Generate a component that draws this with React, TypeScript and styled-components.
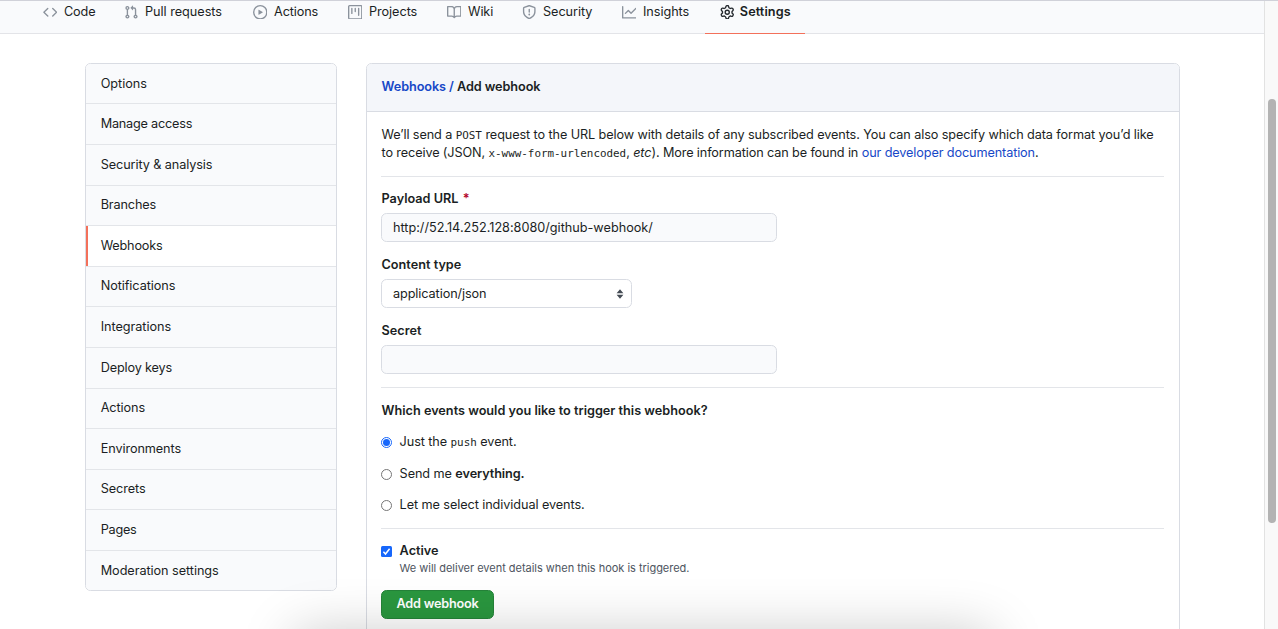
import React from 'react';
import styled, { createGlobalStyle } from 'styled-components';

const Global = createGlobalStyle`
  *, *::before, *::after { box-sizing: border-box; }
  html, body { margin: 0; height: 100%; overflow: hidden; background: #fff; }
  body {
    font-family: Inter, "Liberation Sans", sans-serif;
    font-size: 12.7px;
    line-height: 18px;
    color: #1b1f24;
  }
  b { font-weight: 600; }
`;

const Page = styled.div`
  position: relative;
  display: flex;
  width: 1278px;
  height: 629px;
  overflow: hidden;
  border-top: 1px solid #d0d1d9;
`;
const Content = styled.div`
  flex: 1;
  min-width: 0;
`;
const Track = styled.div`
  width: 14px;
  padding: 98px 0 0 3px;
  background: #f9f9f9;
  border-left: 1px solid #e2e2e2;
`;
const Thumb = styled.div`
  width: 8px;
  height: 424px;
  border-radius: 4px;
  background: #b3b3b3;
`;
const Nav = styled.nav`
  display: flex;
  height: 33px;
  padding-left: 28px;
  background: #f9fafc;
  border-bottom: 1px solid #e3e4e8;
`;
const Tab = styled.a<{ $w: number; $ls: number; $active?: boolean }>`
  display: flex;
  align-items: flex-start;
  width: ${(p) => p.$w}px;
  height: 33px;
  padding: 2px 0 0 14.5px;
  white-space: nowrap;
  letter-spacing: ${(p) => p.$ls}px;
  font-weight: ${(p) => (p.$active ? 600 : 400)};
  color: #1b1f24;
  border-bottom: ${(p) => (p.$active ? '1px solid #f3705a' : '0')};
`;
const Glyph = styled.svg<{ $active?: boolean }>`
  flex: none;
  width: 14.5px;
  height: 14.5px;
  margin: 1.5px ${(p) => (p.$active ? 5.8 : 7)}px 0 0;
  fill: ${(p) => (p.$active ? '#24292e' : '#8b929c')};
`;
const Columns = styled.div`
  display: flex;
  align-items: flex-start;
  gap: 29px;
  padding: 29px 84px 0 85px;
`;
const Menu = styled.aside`
  width: 252px;
  border: 1px solid #d9dce3;
  border-radius: 5.5px;
  overflow: hidden;
`;
const MenuItem = styled.a<{ $active?: boolean; $ls: number }>`
  display: flex;
  align-items: center;
  height: 40.6px;
  padding: 0 0 0.4px 14.7px;
  letter-spacing: ${(p) => p.$ls}px;
  background: ${(p) => (p.$active ? '#fff' : '#f9fafc')};
  box-shadow: ${(p) => (p.$active ? 'inset 2px 0 0 #f3705a' : 'none')};
  border-bottom: 1px solid #e3e5e9;
  &:first-child { height: 40.4px; }
  &:last-child { border-bottom: 0; height: 39.2px; padding: 0 0 0 14.7px; }
`;
const Panel = styled.main`
  flex: 1;
  height: 620px;
  border: 1px solid #d9dce3;
  border-radius: 5.5px;
  overflow: hidden;
`;
const PanelHead = styled.header`
  height: 48px;
  padding: 14px 14.5px;
  background: #f4f6fa;
  border-bottom: 1px solid #d9dce3;
  font-weight: 600;
  letter-spacing: -0.08px;
`;
const Link = styled.a`
  color: #1748c7;
`;
const Body = styled.div`
  padding: 14px 15px 0 14px;
`;
const Intro = styled.p`
  margin: 0 0 14px;
  padding-left: 0.5px;
  white-space: nowrap;
`;
const Line = styled.span<{ $ls: number }>`
  display: block;
  height: 18px;
  letter-spacing: ${(p) => p.$ls}px;
`;
const Code = styled.code`
  font-family: "DejaVu Sans Mono", "Liberation Mono", monospace;
  font-size: 10.9px;
  letter-spacing: 0;
`;
const Rule = styled.hr`
  height: 1px;
  margin: 0;
  border: 0;
  background: #e3e5e9;
`;
const Field = styled.div`
  height: 66px;
`;
const Label = styled.label`
  display: block;
  height: 23px;
  padding-left: 0.5px;
  font-weight: 600;
`;
const Star = styled.span`
  margin-left: 1px;
  color: #b5082e;
`;
const Box = styled.div<{ $w: number; $white?: boolean }>`
  display: flex;
  align-items: center;
  justify-content: space-between;
  width: ${(p) => p.$w}px;
  height: 29px;
  padding: 0 7px 0 11px;
  background: ${(p) => (p.$white ? '#fff' : '#f9fafc')};
  border: 1px solid #d9dce3;
  border-radius: 5.5px;
`;
const Value = styled.span<{ $ls: number }>`
  letter-spacing: ${(p) => p.$ls}px;
`;
const Fields = styled.section`
  height: 210px;
  padding-top: 13px;
`;
const Events = styled.section`
  height: 140px;
  padding-top: 14px;
`;
const Option = styled.div<{ $h: number }>`
  display: flex;
  height: ${(p) => p.$h}px;
  letter-spacing: -0.09px;
`;
const Question = styled.strong`
  padding-left: 0.5px;
  font-weight: 600;
  letter-spacing: 0;
`;
const Radio = styled.span<{ $on?: boolean }>`
  flex: none;
  width: 11px;
  height: 11px;
  margin: 4px 7.6px 0 0;
  border: 1px solid ${(p) => (p.$on ? '#1767fb' : '#767676')};
  border-radius: 50%;
  padding: 1px;
  background: ${(p) => (p.$on ? '#1767fb' : '#fff')} content-box;
`;
const Check = styled.svg`
  flex: none;
  width: 11px;
  height: 11px;
  margin: 4px 7.6px 0 0;
`;
const Active = styled.section`
  display: flex;
  height: 61px;
  padding-top: 13px;
`;
const Note = styled.div`
  font-size: 11px;
  line-height: 17px;
  letter-spacing: -0.025px;
  color: #4d545e;
`;
const Submit = styled.button`
  display: block;
  width: 113px;
  height: 29px;
  padding: 0 0 2px;
  border: 1px solid #258339;
  border-radius: 5.5px;
  background: #2a973f;
  color: #fff;
  font: 600 12.7px Inter, "Liberation Sans", sans-serif;
  letter-spacing: -0.2px;
`;
const Shade = styled.div`
  position: absolute;
  left: 295px;
  top: 632px;
  width: 696px;
  height: 80px;
  box-shadow: 0 0 54px rgba(0, 0, 0, 0.22);
  pointer-events: none;
`;

const icons = {
  code: 'M4.72 3.22a.75.75 0 011.06 1.06L2.06 8l3.72 3.72a.75.75 0 11-1.06 1.06L.47 8.53a.75.75 0 010-1.06l4.25-4.25zm6.56 0a.75.75 0 10-1.06 1.06L13.94 8l-3.72 3.72a.75.75 0 101.06 1.06l4.25-4.25a.75.75 0 000-1.06l-4.25-4.25z',
  pull: 'M7.177 3.073L9.573.677A.25.25 0 0110 .854v4.792a.25.25 0 01-.427.177L7.177 3.427a.25.25 0 010-.354zM3.75 2.5a.75.75 0 100 1.5.75.75 0 000-1.5zm-2.25.75a2.25 2.25 0 113 2.122v5.256a2.251 2.251 0 11-1.5 0V5.372A2.25 2.25 0 011.5 3.25zM11 2.5h-1V4h1a1 1 0 011 1v5.628a2.251 2.251 0 101.5 0V5A2.5 2.5 0 0011 2.5zm1 10.25a.75.75 0 111.5 0 .75.75 0 01-1.5 0zM3.75 12a.75.75 0 100 1.5.75.75 0 000-1.5z',
  play: 'M1.5 8a6.5 6.5 0 1113 0 6.5 6.5 0 01-13 0zM8 0a8 8 0 100 16A8 8 0 008 0zM6.379 5.227A.25.25 0 006 5.442v5.117a.25.25 0 00.379.214l4.264-2.559a.25.25 0 000-.428L6.379 5.227z',
  project: 'M1.75 0A1.75 1.75 0 000 1.75v12.5C0 15.216.784 16 1.75 16h12.5A1.75 1.75 0 0016 14.25V1.75A1.75 1.75 0 0014.25 0H1.75zM1.5 1.75a.25.25 0 01.25-.25h12.5a.25.25 0 01.25.25v12.5a.25.25 0 01-.25.25H1.75a.25.25 0 01-.25-.25V1.75zM11.75 3a.75.75 0 00-.75.75v7.5a.75.75 0 001.5 0v-7.5a.75.75 0 00-.75-.75zm-8.25.75a.75.75 0 011.5 0v5.5a.75.75 0 01-1.5 0v-5.5zM8 3a.75.75 0 00-.75.75v3.5a.75.75 0 001.5 0v-3.5A.75.75 0 008 3z',
  book: 'M0 1.75A.75.75 0 01.75 1h4.253c1.227 0 2.317.59 3 1.501A3.744 3.744 0 0111.006 1h4.245a.75.75 0 01.75.75v10.5a.75.75 0 01-.75.75h-4.507a2.25 2.25 0 00-1.591.659l-.622.621a.75.75 0 01-1.06 0l-.622-.621A2.25 2.25 0 005.258 13H.75a.75.75 0 01-.75-.75V1.75zm8.755 3a2.25 2.25 0 012.25-2.25H14.5v9h-3.757c-.71 0-1.4.201-1.992.572l.004-7.322zm-1.504 7.324l.004-5.073-.002-2.253A2.25 2.25 0 005.003 2.5H1.5v9h3.757a3.75 3.75 0 011.994.574z',
  shield: 'M7.467.133a1.75 1.75 0 011.066 0l5.25 1.68A1.75 1.75 0 0115 3.48V7c0 1.566-.32 3.182-1.303 4.682-.983 1.498-2.585 2.813-5.032 3.855a1.7 1.7 0 01-1.33 0c-2.447-1.042-4.049-2.357-5.032-3.855C1.32 10.182 1 8.566 1 7V3.48a1.75 1.75 0 011.217-1.667l5.25-1.68zm.61 1.429a.25.25 0 00-.153 0l-5.25 1.68a.25.25 0 00-.174.238V7c0 1.358.275 2.666 1.057 3.86.784 1.194 2.121 2.34 4.366 3.297a.2.2 0 00.154 0c2.245-.956 3.582-2.104 4.366-3.298C13.225 9.666 13.5 8.36 13.5 7V3.48a.25.25 0 00-.174-.237l-5.25-1.68zM9 10.5a1 1 0 11-2 0 1 1 0 012 0zm-.25-5.75a.75.75 0 10-1.5 0v3a.75.75 0 001.5 0v-3z',
  graph: 'M1.5 1.75a.75.75 0 00-1.5 0v12.5c0 .414.336.75.75.75h14.5a.75.75 0 000-1.5H1.5V1.75zm14.28 2.53a.75.75 0 00-1.06-1.06L10 7.94 7.53 5.47a.75.75 0 00-1.06 0L3.22 8.72a.75.75 0 001.06 1.06L7 7.06l2.47 2.47a.75.75 0 001.06 0l5.25-5.25z',
  gear: 'M7.429 1.525a6.593 6.593 0 011.142 0c.036.003.108.036.137.146l.289 1.105c.147.56.55.967.997 1.189.174.086.341.183.501.29.417.278.97.423 1.53.27l1.102-.303c.11-.03.175.016.195.046.219.31.41.641.573.989.014.031.022.11-.059.19l-.815.806c-.411.406-.562.957-.53 1.456a4.588 4.588 0 010 .582c-.032.499.119 1.05.53 1.456l.815.806c.08.08.073.159.059.19a6.494 6.494 0 01-.573.99c-.02.029-.086.074-.195.045l-1.103-.303c-.559-.153-1.112-.008-1.529.27-.16.107-.327.204-.5.29-.449.222-.851.628-.998 1.189l-.289 1.105c-.029.11-.101.143-.137.146a6.613 6.613 0 01-1.142 0c-.036-.003-.108-.037-.137-.146l-.289-1.105c-.147-.56-.55-.967-.997-1.189a4.502 4.502 0 01-.501-.29c-.417-.278-.97-.423-1.53-.27l-1.102.303c-.11.03-.175-.016-.195-.046a6.492 6.492 0 01-.573-.989c-.014-.031-.022-.11.059-.19l.815-.806c.411-.406.562-.957.53-1.456a4.587 4.587 0 010-.582c.032-.499-.119-1.05-.53-1.456l-.815-.806c-.08-.08-.073-.159-.059-.19a6.44 6.44 0 01.573-.99c.02-.029.086-.075.195-.045l1.103.303c.559.153 1.112.008 1.529-.27.16-.107.327-.204.5-.29.449-.222.851-.628.998-1.189l.289-1.105c.029-.11.101-.143.137-.146zM8 0c-.236 0-.47.01-.701.03-.743.065-1.29.615-1.458 1.261l-.29 1.106c-.017.066-.078.158-.211.224a5.994 5.994 0 00-.668.386c-.123.082-.233.09-.3.071L3.27 2.776c-.644-.177-1.392.02-1.82.63a7.977 7.977 0 00-.704 1.217c-.315.675-.111 1.422.363 1.891l.815.806c.05.048.098.147.088.294a6.084 6.084 0 000 .772c.01.147-.038.246-.088.294l-.815.806c-.474.469-.678 1.216-.363 1.891.2.428.436.835.704 1.218.428.609 1.176.806 1.82.63l1.103-.303c.066-.019.176-.011.299.071.213.143.436.272.668.386.133.066.194.158.212.224l.289 1.106c.169.646.715 1.196 1.458 1.26a8.094 8.094 0 001.402 0c.743-.064 1.29-.614 1.458-1.26l.29-1.106c.017-.066.078-.158.211-.224a5.98 5.98 0 00.668-.386c.123-.082.233-.09.3-.071l1.102.302c.644.177 1.392-.02 1.82-.63.268-.382.505-.789.704-1.217.315-.675.111-1.422-.364-1.891l-.814-.806c-.05-.048-.098-.147-.088-.294a6.1 6.1 0 000-.772c-.01-.147.039-.246.088-.294l.814-.806c.475-.469.679-1.216.364-1.891a7.992 7.992 0 00-.704-1.218c-.428-.609-1.176-.806-1.82-.63l-1.103.303c-.066.019-.176.011-.299-.071a5.991 5.991 0 00-.668-.386c-.133-.066-.194-.158-.212-.224L10.16 1.29C9.99.645 9.444.095 8.701.031A8.094 8.094 0 008 0zm1.5 8a1.5 1.5 0 11-3 0 1.5 1.5 0 013 0zM11 8a3 3 0 11-6 0 3 3 0 016 0z',
};

const tabs: { label: string; icon: keyof typeof icons; w: number; ls: number; active?: boolean }[] = [
  { label: 'Code', icon: 'code', w: 81, ls: -0.15 },
  { label: 'Pull requests', icon: 'pull', w: 129, ls: -0.03 },
  { label: 'Actions', icon: 'play', w: 95, ls: -0.12 },
  { label: 'Projects', icon: 'project', w: 99, ls: -0.06 },
  { label: 'Wiki', icon: 'book', w: 75, ls: -0.1 },
  { label: 'Security', icon: 'shield', w: 100, ls: -0.06 },
  { label: 'Insights', icon: 'graph', w: 98, ls: -0.06 },
  { label: 'Settings', icon: 'gear', w: 100, ls: 0.08, active: true },
];

const menu: [string, number][] = [
  ['Options', -0.03],
  ['Manage access', -0.22],
  ['Security & analysis', -0.1],
  ['Branches', -0.13],
  ['Webhooks', -0.2],
  ['Notifications', -0.08],
  ['Integrations', -0.05],
  ['Deploy keys', -0.15],
  ['Actions', -0.1],
  ['Environments', -0.1],
  ['Secrets', -0.08],
  ['Pages', -0.25],
  ['Moderation settings', -0.06],
];

export default function App() {
  return (
    <Page>
      <Global />
      <Content>
        <Nav>
          {tabs.map((t) => (
            <Tab key={t.label} $w={t.w} $ls={t.ls} $active={t.active}>
              <Glyph viewBox="0 0 16 16" $active={t.active}>
                <path fillRule="evenodd" d={icons[t.icon]} />
              </Glyph>
              {t.label}
            </Tab>
          ))}
        </Nav>
        <Columns>
          <Menu>
            {menu.map(([label, ls]) => (
              <MenuItem key={label} $ls={ls} $active={label === 'Webhooks'}>
                {label}
              </MenuItem>
            ))}
          </Menu>
          <Panel>
            <PanelHead>
              <Link>Webhooks /</Link> Add webhook
            </PanelHead>
            <Body>
              <Intro>
                <Line $ls={-0.108}>
                  We’ll send a <Code>POST</Code> request to the URL below with details of any subscribed events. You can
                  also specify which data format you’d like
                </Line>
                <Line $ls={-0.125}>
                  to receive (JSON, <Code>x-www-form-urlencoded</Code>, <em>etc</em>). More information can be found in{' '}
                  <Link>our developer documentation</Link>.
                </Line>
              </Intro>
              <Rule />
              <Fields>
                <Field>
                  <Label>
                    Payload URL <Star>*</Star>
                  </Label>
                  <Box $w={396}>
                    <Value $ls={-0.01}>http://52.14.252.128:8080/github-webhook/</Value>
                  </Box>
                </Field>
                <Field>
                  <Label>Content type</Label>
                  <Box $w={251} $white>
                    <Value $ls={-0.1}>application/json</Value>
                    <svg width="8" height="10" viewBox="0 0 8 10" fill="#444b54">
                      <path d="M4 0.3 7.4 4.2H0.6zM4 9.7 0.6 5.8H7.4z" />
                    </svg>
                  </Box>
                </Field>
                <Field>
                  <Label>Secret</Label>
                  <Box $w={396} />
                </Field>
              </Fields>
              <Rule />
              <Events>
                <Option $h={31}>
                  <Question>Which events would you like to trigger this webhook?</Question>
                </Option>
                <Option $h={32}>
                  <Radio $on />
                  <span>
                    Just the <Code>push</Code> event.
                  </span>
                </Option>
                <Option $h={31}>
                  <Radio />
                  <span>
                    Send me <b>everything.</b>
                  </span>
                </Option>
                <Option $h={31}>
                  <Radio />
                  <span>Let me select individual events.</span>
                </Option>
              </Events>
              <Rule />
              <Active>
                <Check viewBox="0 0 11 11">
                  <rect width="11" height="11" rx="1.5" fill="#1767fb" />
                  <path d="M2.4 5.8 4.5 8 8.6 2.8" fill="none" stroke="#fff" strokeWidth="1.5" />
                </Check>
                <div>
                  <b>Active</b>
                  <Note>We will deliver event details when this hook is triggered.</Note>
                </div>
              </Active>
              <Submit>Add webhook</Submit>
            </Body>
          </Panel>
        </Columns>
      </Content>
      <Track>
        <Thumb />
      </Track>
      <Shade />
    </Page>
  );
}
